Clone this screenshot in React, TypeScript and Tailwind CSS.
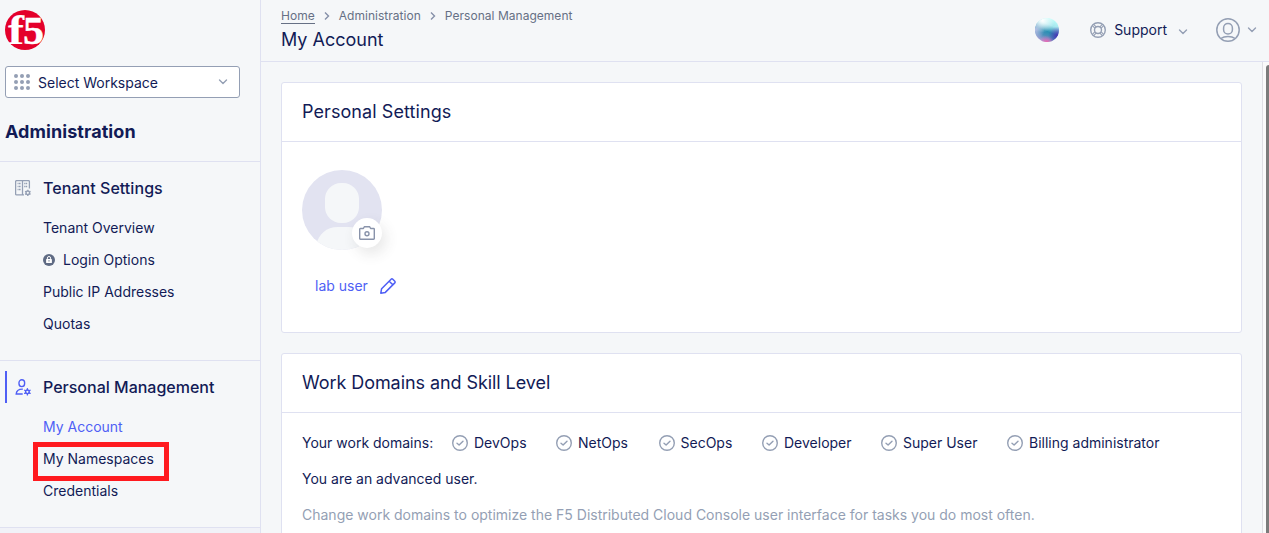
import React from "react";

const ink = "text-[#121b56]";

function Chevron({ className = "" }: { className?: string }) {
  return (
    <svg viewBox="0 0 10 6" className={`h-[6px] w-[10px] shrink-0 ${className}`} fill="none" stroke="#949fb4" strokeWidth="1.4" strokeLinecap="round" strokeLinejoin="round">
      <path d="M1.5 1 5 4.5 8.5 1" />
    </svg>
  );
}

function Logo() {
  return (
    <svg viewBox="0 0 40 40" className="h-10 w-10 overflow-visible">
      <circle cx="20" cy="20" r="20" fill="#e4002b" />
      <g fill="#fff" stroke="#fff" fontFamily="'Liberation Serif', serif" fontWeight="700">
        <text x="3" y="34.3" fontSize="42" strokeWidth="0.2" textLength="16" lengthAdjust="spacingAndGlyphs">f</text>
        <text x="18" y="34" fontSize="40" strokeWidth="0.4" textLength="21" lengthAdjust="spacingAndGlyphs">5</text>
      </g>
    </svg>
  );
}

function Gear({ cx, cy, color }: { cx: number; cy: number; color: string }) {
  return (
    <g transform={`translate(${cx} ${cy})`} stroke={color} fill="none">
      <circle r="1.8" strokeWidth="1.4" />
      <path strokeWidth="1.4" d="M0-3.1v1M0 2.1v1M-2.7-1.55l.9.5M1.8 1.05l.9.5M-2.7 1.55l.9-.5M1.8-1.05l.9-.5" />
    </g>
  );
}

function TenantIcon() {
  return (
    <svg viewBox="0 0 17 17" className="h-[17px] w-[17px]" fill="none" stroke="#949fb4" strokeWidth="1.3">
      <path d="M9 14.9H1.6a1 1 0 0 1-1-1V1.6a1 1 0 0 1 1-1h11.8a1 1 0 0 1 1 1v7M7.5.6v14.3" />
      <path d="M2.6 3.5h3M2.6 6.5h3M2.6 9.5h3M9.2 3.5h3M9.2 6.5h3" strokeDasharray="1 .4 1.6" />
      <Gear cx={12.8} cy={12.8} color="#949fb4" />
    </svg>
  );
}

function PersonIcon() {
  return (
    <svg viewBox="0 0 17 17" className="h-[17px] w-[17px]" fill="none" stroke="#4f5ff5" strokeWidth="1.4" strokeLinecap="round">
      <rect x="4" y=".8" width="5.6" height="6.8" rx="2.8" />
      <path d="M7.2 15H1.2c.2-3 2.2-4.9 6.2-4.9" />
      <Gear cx={12.4} cy={12.8} color="#4f5ff5" />
    </svg>
  );
}

function LockBadge() {
  return (
    <svg viewBox="0 0 12 12" className="mr-2 h-3 w-3">
      <circle cx="6" cy="6" r="6" fill="#5f6b84" />
      <rect x="3.1" y="5.1" width="5.8" height="3.9" rx=".6" fill="#fff" />
      <path d="M4.4 5.2V4.1a1.6 1.6 0 0 1 3.2 0v1.1" fill="none" stroke="#fff" strokeWidth="1" />
      <rect x="5.5" y="6.2" width="1" height="1.3" fill="#5f6b84" />
    </svg>
  );
}

function CheckIcon() {
  return (
    <svg viewBox="0 0 16 16" className="mr-[6px] h-4 w-4" fill="none" stroke="#949fb4" strokeWidth="1.4" strokeLinecap="round" strokeLinejoin="round">
      <circle cx="8" cy="8" r="7.3" />
      <path d="m5 8.2 2.1 1.8 3.9-3.8" />
    </svg>
  );
}

function SupportIcon() {
  return (
    <svg viewBox="0 0 16 16" className="h-4 w-4" fill="none" stroke="#949fb4" strokeWidth="1.4">
      <circle cx="8" cy="8" r="7.3" />
      <circle cx="8" cy="8" r="3.5" />
      <path d="M3.7 2.4 6.1 4.8M2.4 3.7 4.8 6.1M12.3 2.4 9.9 4.8M13.6 3.7 11.2 6.1M3.7 13.6 6.1 11.2M2.4 12.3 4.8 9.9M12.3 13.6 9.9 11.2M13.6 12.3 11.2 9.9" strokeWidth="1.1" />
    </svg>
  );
}

function UserIcon() {
  return (
    <svg viewBox="0 0 24 24" className="h-6 w-6" fill="none" stroke="#949fb4" strokeWidth="1.5">
      <circle cx="12" cy="12" r="11.2" />
      <rect x="7.6" y="5.6" width="8.8" height="10.4" rx="4.3" />
      <path d="M5.3 20.3c1.6-1.4 3.8-1.8 6.7-1.8s5.1.4 6.7 1.8" />
    </svg>
  );
}

function Orb() {
  return (
    <svg viewBox="0 0 24 24" className="h-6 w-6">
      <defs>
        <linearGradient id="base" x1=".7" y1="0" x2=".3" y2="1">
          <stop offset="0" stopColor="#c0fffa" />
          <stop offset=".28" stopColor="#a4e6ee" />
          <stop offset=".55" stopColor="#2a8fb3" />
          <stop offset=".72" stopColor="#4a8fba" />
          <stop offset=".95" stopColor="#a8a0d6" />
        </linearGradient>
        <radialGradient id="shine" cx=".32" cy=".1" r=".5">
          <stop offset="0" stopColor="#fff" />
          <stop offset="1" stopColor="#fff" stopOpacity="0" />
        </radialGradient>
        <radialGradient id="haze" cx="0" cy=".5" r=".4">
          <stop offset="0" stopColor="#b9bfe6" />
          <stop offset="1" stopColor="#b9bfe6" stopOpacity="0" />
        </radialGradient>
        <radialGradient id="violet" cx=".95" cy=".75" r=".4">
          <stop offset="0" stopColor="#4b2ab4" />
          <stop offset="1" stopColor="#4b3ab4" stopOpacity="0" />
        </radialGradient>
        <radialGradient id="pink" cx=".48" cy="1.04" r=".32">
          <stop offset="0" stopColor="#ff5ba8" />
          <stop offset="1" stopColor="#d868c0" stopOpacity="0" />
        </radialGradient>
      </defs>
      <circle cx="12" cy="12" r="12" fill="url(#base)" />
      <circle cx="12" cy="12" r="12" fill="url(#haze)" />
      <circle cx="12" cy="12" r="12" fill="url(#shine)" />
      <circle cx="12" cy="12" r="12" fill="url(#violet)" />
      <circle cx="12" cy="12" r="12" fill="url(#pink)" />
    </svg>
  );
}

function NavItem({ children, active }: { children: React.ReactNode; active?: boolean }) {
  return (
    <a className={`flex h-8 items-center text-sm ${active ? "text-[#4f5ff5]" : ""}`}>{children}</a>
  );
}

function CrumbArrow() {
  return (
    <svg viewBox="0 0 6 8" className="mx-[9px] h-2 w-[6px]" fill="none" stroke="#8590a8" strokeWidth="1.4">
      <path d="m1 .6 3.5 3.4L1 7.4" />
    </svg>
  );
}

function Sidebar() {
  return (
    <aside className="flex w-[261px] shrink-0 flex-col border-r border-[#dfe1f1]">
      <div className="h-[161px] pl-[5px] pt-[10px]">
        <Logo />
        <button className="mt-4 flex h-8 w-[235px] items-center rounded-[3px] border border-[#949fb4] bg-white pl-2">
          <svg viewBox="0 0 16 16" className="h-4 w-4" fill="#949fb4">
            {[2, 8, 14].map((y) => [2, 8, 14].map((x) => <circle key={`${x}-${y}`} cx={x} cy={y} r="2" />))}
          </svg>
          <span className="ml-2 mt-[2px] text-sm">Select Workspace</span>
          <Chevron className="ml-auto mr-[11px]" />
        </button>
        <h2 className="mt-[20px] text-[18px] leading-[27px] font-bold tracking-[0.07px]">Administration</h2>
      </div>
      <section className="h-[199px] border-t border-[#dfe1f1] pt-[10px]">
        <div className="flex h-8 items-center pl-[15px]">
          <TenantIcon />
          <h3 className="ml-[11px] text-base font-medium tracking-[0.05px]">Tenant Settings</h3>
        </div>
        <nav className="mt-2 pl-[43px]">
          <NavItem>Tenant Overview</NavItem>
          <NavItem><LockBadge />Login Options</NavItem>
          <NavItem>Public IP Addresses</NavItem>
          <NavItem>Quotas</NavItem>
        </nav>
      </section>
      <section className="h-[167px] border-t border-[#dfe1f1] pt-[10px]">
        <div className="ml-[5px] flex h-8 items-center border-l-2 border-[#4f5ff5] pl-[8px]">
          <PersonIcon />
          <h3 className="ml-[11px] text-base font-medium">Personal Management</h3>
        </div>
        <nav className="relative mt-2 pl-[43px]">
          <NavItem active>My Account</NavItem>
          <NavItem>My Namespaces</NavItem>
          <NavItem>Credentials</NavItem>
          <div className="absolute left-[33px] top-[31px] h-[39px] w-[136px] border-[5px] border-[#ff1a1f]" />
        </nav>
      </section>
      <div className="flex-1 border-t border-[#dfe1f1] bg-[#f1f2f8]" />
    </aside>
  );
}

function Header() {
  return (
    <header className="flex h-[62px] shrink-0 border-b border-[#dfe1f1] pl-5">
      <div>
        <div className="mt-[7px] flex h-[18px] items-center text-xs tracking-[0.03px] text-[#667085]">
          <span className="border-b border-[#667085] leading-[14px]">Home</span>
          <CrumbArrow />
          <span>Administration</span>
          <CrumbArrow />
          <span>Personal Management</span>
        </div>
        <h1 className="mt-[2px] text-[18px] leading-[26px]">My Account</h1>
      </div>
      <div className="ml-auto flex h-[60px] items-center pr-[12px]">
        <Orb />
        <span className="ml-[31px]"><SupportIcon /></span>
        <span className="ml-2 text-sm">Support</span>
        <Chevron className="ml-[11px] mt-[3px]" />
        <span className="ml-[28px]"><UserIcon /></span>
        <Chevron className="ml-[7px]" />
      </div>
    </header>
  );
}

function Card({ title, titleClass, className, children }: { title: string; titleClass: string; className: string; children: React.ReactNode }) {
  return (
    <section className={`shrink-0 rounded-[3px] border border-[#dfe1f1] bg-white ${className}`}>
      <h2 className={`flex h-[59px] items-center border-b border-[#dfe1f1] pb-[2px] pl-5 text-[18px] ${titleClass}`}>{title}</h2>
      {children}
    </section>
  );
}

function Avatar() {
  return (
    <div className="relative h-20 w-20">
      <svg viewBox="0 0 80 80" className="h-20 w-20">
        <defs><clipPath id="avatar"><circle cx="40" cy="40" r="40" /></clipPath></defs>
        <g clipPath="url(#avatar)">
          <rect width="80" height="80" fill="#e2e3f1" />
          <rect x="23" y="13" width="34" height="40" rx="16" fill="#f5f7f9" />
          <path d="M14 75c3-11 10-18 22-18h10c12 0 19 7 22 18v10H14Z" fill="#f5f7f9" />
        </g>
      </svg>
      <span className="absolute left-[50px] top-[48px] flex h-[30px] w-[30px] items-center justify-center rounded-full bg-white shadow-[4px_6px_14px_rgba(60,60,60,0.12)]">
        <svg viewBox="0 0 16 14" className="h-[14px] w-4" fill="none" stroke="#8993aa" strokeWidth="1.4" strokeLinejoin="round">
          <path d="M.7 3.2a.7.7 0 0 1 .7-.7h3L5.3.7h5.4l.9 1.8h3a.7.7 0 0 1 .7.7v9.4a.7.7 0 0 1-.7.7H1.4a.7.7 0 0 1-.7-.7Z" />
          <circle cx="8" cy="7.8" r="2" />
        </svg>
      </span>
    </div>
  );
}

const domains = [
  { name: "DevOps", cell: "w-[104px]" },
  { name: "NetOps", cell: "w-[102.5px]" },
  { name: "SecOps", cell: "w-[103.5px]" },
  { name: "Developer", cell: "w-[119px]" },
  { name: "Super User", cell: "w-[126px]" },
  { name: "Billing administrator", cell: "w-[170px]" },
];

export default function App() {
  return (
    <div className={`flex h-[533px] w-[1269px] overflow-hidden bg-[#f5f7f9] font-['Inter',sans-serif] ${ink}`}>
      <Sidebar />
      <div className="flex min-w-0 flex-1 flex-col">
        <Header />
        <div className="flex min-h-0 flex-1">
          <main className="flex flex-1 flex-col gap-5 overflow-hidden px-5 pt-5">
            <Card title="Personal Settings" titleClass="tracking-[0.08px]" className="h-[251px]">
              <div className="pl-5 pt-7">
                <Avatar />
                <div className="ml-[13px] mt-[26px] flex h-5 items-center text-sm text-[#4f5ff5]">
                  lab user
                  <svg viewBox="0 0 16 16" className="ml-3 h-4 w-4" fill="none" stroke="#4f5ff5" strokeWidth="1.5" strokeLinejoin="round">
                    <path d="m.8 15.2.8-4.5L11.1 1.2a1.2 1.2 0 0 1 1.7 0l2 2a1.2 1.2 0 0 1 0 1.7l-9.5 9.5ZM9.2 3.2l3.6 3.6" />
                  </svg>
                </div>
              </div>
            </Card>
            <Card title="Work Domains and Skill Level" titleClass="tracking-[-0.07px]" className="h-[251px]">
              <div className="pl-5 pt-5 text-sm">
                <div className="flex h-5 items-center">
                  <span className="w-[150px]">Your work domains:</span>
                  {domains.map((d) => (
                    <span key={d.name} className={`flex items-center whitespace-nowrap ${d.cell}`}>
                      <CheckIcon />
                      {d.name}
                    </span>
                  ))}
                </div>
                <p className="mt-4 leading-5">You are an advanced user.</p>
                <p className="mt-4 leading-5 text-[#949fb4]">
                  Change work domains to optimize the F5 Distributed Cloud Console user interface for tasks you do most often.
                </p>
              </div>
            </Card>
          </main>
          <div className="w-[7px] border-l border-[#dfdfe4] bg-[#fafafa] pl-[3px] pt-[3px]">
            <div className="h-full rounded-tl-[3px] bg-[#7b7b7b]" />
          </div>
        </div>
      </div>
    </div>
  );
}
